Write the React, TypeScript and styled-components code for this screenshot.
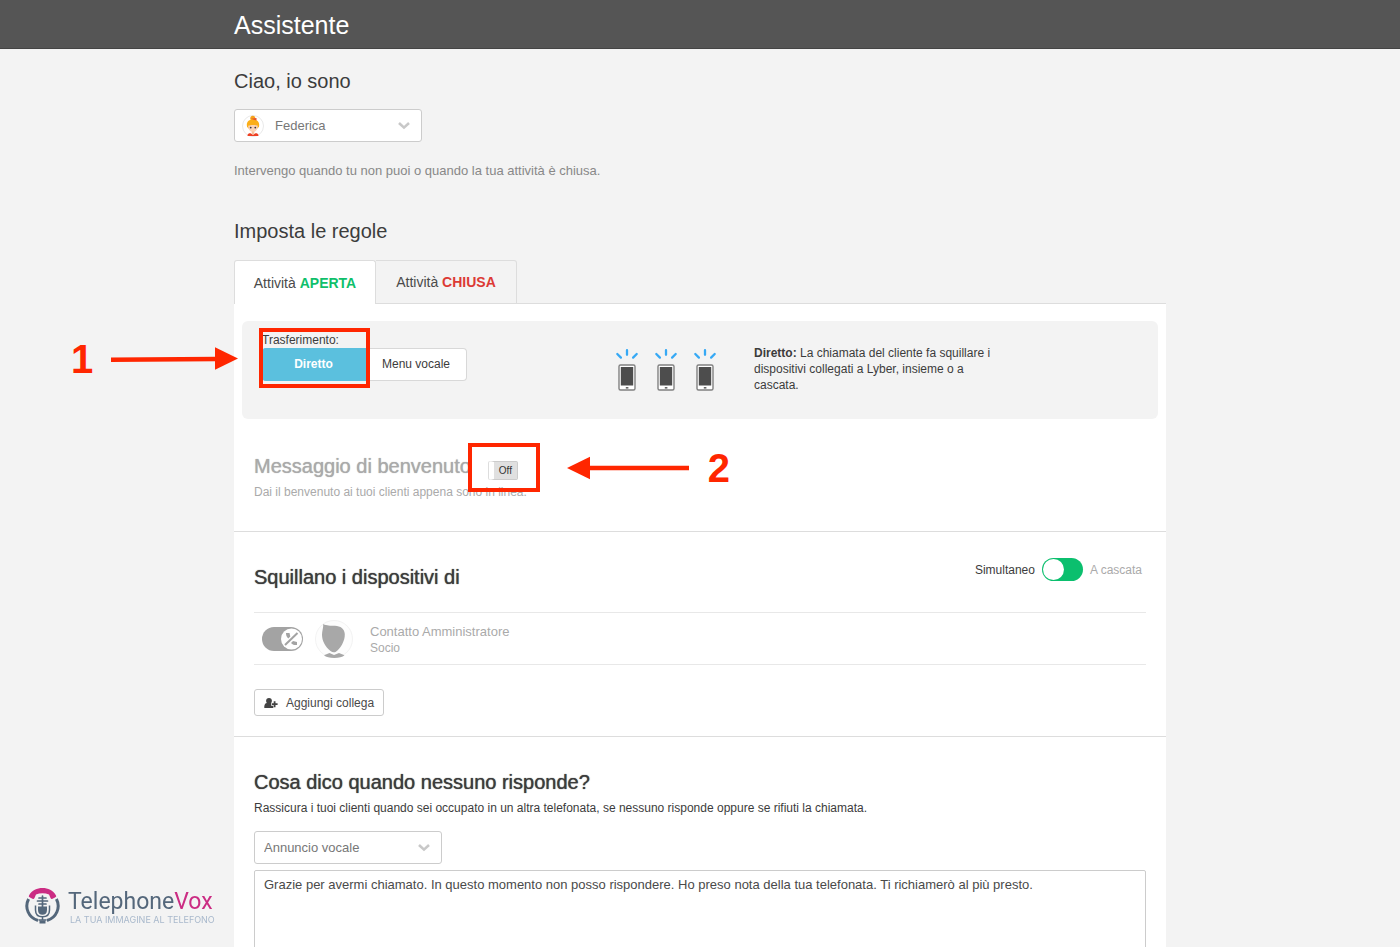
import React, { useState } from "react";
import styled, { createGlobalStyle, css } from "styled-components";

const GlobalStyle = createGlobalStyle`
  *, *::before, *::after { box-sizing: border-box; }
  body {
    margin: 0;
    background: #f3f3f3;
    color: #3c3c3c;
    font-family: "Helvetica Neue", "Liberation Sans", Arial, sans-serif;
    font-size: 12px;
    line-height: 16px;
  }
  button, select, textarea, input { font: inherit; color: inherit; margin: 0; }
  h1, h2, h3, p, ul { margin: 0; padding: 0; font-weight: 400; }
`;

const Page = styled.div`
  height: 100vh;
  overflow-y: auto;
  scrollbar-width: none;
`;

const TopBar = styled.header`
  background: #555;
  border-bottom: 1px solid #444;
  padding: 0 20px;
`;

const Column = styled.div`
  max-width: 932px;
  margin: 0 auto;
`;

const PageTitle = styled.h1`
  color: #fff;
  font-size: 25px;
  line-height: 48px;
  padding-top: 1px;
  margin-bottom: -1px;
`;

const Main = styled.main`
  padding: 20px 20px 24px;
`;

const BlockTitle = styled.h2`
  font-size: 20px;
  line-height: 24px;
`;

const Intro = styled.section`
  display: flex;
  flex-direction: column;
  align-items: flex-start;
  gap: 16px;
  margin-bottom: 40px;
`;

const Hint = styled.p`
  color: #888;
  font-size: 13px;
  margin-top: 5px;
`;

const SelectBox = styled.div`
  position: relative;
  width: 188px;
`;

const Select = styled.select<{ $withPicture?: boolean }>`
  appearance: none;
  display: block;
  width: 100%;
  height: 33px;
  padding: 0 30px 0 ${(p) => (p.$withPicture ? 40 : 9)}px;
  background: #fff;
  border: 1px solid #ccc;
  border-radius: 3px;
  color: #777;
  font-size: 13px;
`;

const Chevron = styled.svg`
  position: absolute;
  right: 12px;
  top: 12px;
  pointer-events: none;
`;

const Picture = styled.svg`
  position: absolute;
  left: 8px;
  top: 6px;
  pointer-events: none;
`;

const Tabs = styled.div`
  display: flex;
  margin-top: 17px;
`;

const Tab = styled.button<{ $active: boolean }>`
  width: 141px;
  height: 44px;
  padding: 0;
  background: #f3f3f3;
  border: solid #ddd;
  border-width: 1px 1px 1px 0;
  border-radius: 0 3px 0 0;
  color: #4a4a4a;
  font-size: 14px;
  ${(p) =>
    p.$active &&
    css`
      width: 142px;
      background: #fff;
      border-width: 1px 1px 0 1px;
      border-radius: 3px 3px 0 0;
    `}
`;

const TabsRest = styled.div`
  flex: 1;
  border-bottom: 1px solid #ddd;
`;

const State = styled.strong<{ $open?: boolean }>`
  color: ${(p) => (p.$open ? "#0fbf6b" : "#dc3a35")};
`;

const Panel = styled.div`
  background: #fff;
`;

const TransferBand = styled.div`
  padding: 17px 8px 0;
`;

const Transfer = styled.div`
  display: grid;
  grid-template-columns: 353px 139px 240px;
  align-items: start;
  min-height: 98px;
  padding: 12px 20px;
  background: #f3f3f3;
  border-radius: 6px;
`;

const TransferChoice = styled.div`
  position: relative;
  width: 205px;
  line-height: 15px;
`;

const ButtonGroup = styled.div`
  display: flex;
`;

const Choice = styled.button<{ $active: boolean }>`
  flex: none;
  width: 101px;
  height: 33px;
  padding: 0;
  background: #fff;
  border: 1px solid #d8d8d8;
  border-left: 0;
  border-radius: 0 4px 4px 0;
  ${(p) =>
    p.$active &&
    css`
      width: 104px;
      background: #5bc0de;
      border-color: #5bc0de;
      border-radius: 4px 0 0 4px;
      color: #fff;
      font-weight: 700;
    `}
`;

const Phones = styled.svg`
  margin-top: 16px;
`;

const TransferText = styled.p`
  margin-top: 12px;
`;

const Section = styled.section`
  padding: 33px 20px 20px;
  border-bottom: 1px solid #ddd;
  &:last-child { border-bottom: 0; }
`;

const Welcome = styled(Section)`
  padding: 35px 20px 31px;
  color: #aaa;
`;

const SectionTitle = styled.h3`
  font-size: 20px;
  line-height: 24px;
  text-shadow: 0 0 1px currentColor;
`;

const TitleLine = styled.div`
  display: flex;
  align-items: flex-end;
  gap: 18px;
`;

const SplitLine = styled.div`
  display: flex;
  align-items: center;
  justify-content: space-between;
  padding-right: 4px;
`;

const Note = styled.p`
  margin-top: 6px;
`;

const OffSwitch = styled.button`
  position: relative;
  width: 29px;
  height: 19px;
  margin-bottom: -2px;
  padding: 0;
  background: #e0e0e0;
  border: 1px solid #ccc;
  border-left: 5px solid #fff;
  border-radius: 2px;
  box-shadow: -1px 0 0 #ddd;
  color: #333;
  font-size: 10px;
  line-height: 16px;
`;

const Order = styled.div`
  display: flex;
  align-items: center;
  gap: 7px;
  margin-top: -15px;
`;

const OrderLabel = styled.label<{ $muted?: boolean }>`
  color: ${(p) => (p.$muted ? "#aaa" : "inherit")};
`;

const Switch = styled.input`
  appearance: none;
  width: 41px;
  height: 23px;
  border-radius: 12px;
  background: #0bbf6e;
  &::before {
    content: "";
    display: block;
    width: 21px;
    height: 21px;
    margin: 1px;
    border-radius: 50%;
    background: #fff;
  }
  &:checked::before { margin-left: 19px; }
`;

const People = styled.ul`
  list-style: none;
  margin: 23px 0 24px;
  border-top: 1px solid #e8e8e8;
`;

const Person = styled.li`
  display: flex;
  align-items: center;
  height: 52px;
  padding: 0 8px;
  gap: 12px;
  border-bottom: 1px solid #e8e8e8;
  color: #aaa;
`;

const RingSwitch = styled.button`
  display: flex;
  padding: 0;
  border: 0;
  background: none;
`;

const PersonText = styled.div`
  margin-left: 4px;
  padding-top: 2px;
`;

const PersonName = styled.p`
  font-size: 13px;
`;

const AddButton = styled.button`
  display: flex;
  align-items: center;
  gap: 8px;
  height: 27px;
  padding: 0 9px;
  background: #fff;
  border: 1px solid #ccc;
  border-radius: 3px;
  color: #4a4a4a;
`;

const Answer = styled.div`
  display: flex;
  flex-direction: column;
  gap: 6px;
  margin-top: 15px;
`;

const Message = styled.textarea`
  display: block;
  width: 100%;
  height: 120px;
  padding: 6px 9px;
  border: 1px solid #ccc;
  border-radius: 2px;
  color: #4a4a4a;
  font-size: 13px;
  resize: none;
`;

const Frame = styled.span<{ $w: number; $h: number; $x: number; $y: number }>`
  position: absolute;
  left: ${(p) => p.$x}px;
  top: ${(p) => p.$y}px;
  width: ${(p) => p.$w}px;
  height: ${(p) => p.$h}px;
  border: 4px solid #ff2600;
  pointer-events: none;
`;

const Callout = styled.div<{ $x: number; $y: number }>`
  position: absolute;
  left: ${(p) => p.$x}px;
  top: ${(p) => p.$y}px;
  display: flex;
  align-items: center;
  gap: 18px;
  color: #ff2600;
  font-size: 40px;
  font-weight: 700;
  line-height: 44px;
  pointer-events: none;
`;

const Brand = styled.a`
  position: fixed;
  left: 25px;
  bottom: 23px;
  display: flex;
  align-items: center;
  gap: 8px;
  color: #54677b;
  text-decoration: none;
`;

const BrandName = styled.div`
  font-family: Roboto, sans-serif;
  font-size: 23px;
  line-height: 28px;
`;

const BrandAccent = styled.span`
  color: #cb2c83;
`;

const BrandLine = styled.div`
  padding-left: 2px;
  color: #a9b9cc;
  font-family: Inter, sans-serif;
  font-size: 9px;
  line-height: 8px;
`;

const DownChevron = () => (
  <Chevron width="12" height="9" viewBox="0 0 12 9" aria-hidden="true">
    <path d="M1 2 L6 6.6 L11 2" fill="none" stroke="#c8c8c8" strokeWidth="2.6" />
  </Chevron>
);

const PhoneShape = ({ x }: { x: number }) => (
  <g transform={`translate(${x} 0)`}>
    <path d="M12 1.2v4.600M2.300 5l3.600 3.600M21.700 5l-3.600 3.600" stroke="#36a9f5" strokeWidth="2.300" strokeLinecap="round" fill="none" />
    <rect x="4" y="16" width="16" height="25" rx="1.500" fill="#fff" stroke="#808080" strokeWidth="1.400" />
    <rect x="5.800" y="18" width="12.400" height="18.500" fill="#4d4d4d" />
    <rect x="10.800" y="38" width="2.600" height="1.600" fill="#666" />
  </g>
);

export default function App() {
  const [open, setOpen] = useState(true);
  const [direct, setDirect] = useState(true);

  return (
    <Page>
      <GlobalStyle />
      <TopBar>
        <Column>
          <PageTitle>Assistente</PageTitle>
        </Column>
      </TopBar>
      <Main>
        <Column>
          <Intro>
            <BlockTitle>Ciao, io sono</BlockTitle>
            <SelectBox>
              <Select $withPicture aria-label="Assistente" defaultValue="Federica">
                <option>Federica</option>
              </Select>
              <Picture width="22" height="22" viewBox="0 0 22 22" aria-hidden="true">
                <circle cx="11" cy="11" r="10.5" fill="#fff" stroke="#e9e9e9" />
                <circle cx="10.800" cy="3.200" r="2.500" fill="#f5a21b" />
                <path d="M5 11.500C4 6.800 7 4.500 11 4.500S18 7 17 11.500C16 14 14 14 11 14S6 14 5 11.500Z" fill="#fbae17" />
                <path d="M9 3.800L14.500 3L14.500 5.600Z" fill="#e8512a" />
                <path d="M6.200 10.800C8.500 9.800 13.500 9.800 15.800 10.800C15.800 15 13.300 17 11 17S6.100 15 6.200 10.800Z" fill="#fbd3b4" />
                <circle cx="8.700" cy="12.600" r=".9" fill="#334" />
                <circle cx="13.300" cy="12.600" r=".9" fill="#334" />
                <path d="M9.700 16.500h2.600v3h-2.600z" fill="#f6c19d" />
                <path d="M5.500 21C5.500 18.600 7.500 18.200 9 18.400L11 20L13 18.400C14.500 18.200 16.500 18.600 16.500 21Z" fill="#ee4023" />
              </Picture>
              <DownChevron />
            </SelectBox>
            <Hint>Intervengo quando tu non puoi o quando la tua attività è chiusa.</Hint>
          </Intro>

          <BlockTitle>Imposta le regole</BlockTitle>
          <Tabs role="tablist">
            <Tab role="tab" aria-selected={open} $active={open} onClick={() => setOpen(true)}>
              Attività <State $open>APERTA</State>
            </Tab>
            <Tab role="tab" aria-selected={!open} $active={!open} onClick={() => setOpen(false)}>
              Attività <State>CHIUSA</State>
            </Tab>
            <TabsRest />
          </Tabs>

          <Panel role="tabpanel">
            <TransferBand>
              <Transfer>
                <TransferChoice>
                  <span id="transfer">Trasferimento:</span>
                  <ButtonGroup role="group" aria-labelledby="transfer">
                    <Choice $active={direct} onClick={() => setDirect(true)}>Diretto</Choice>
                    <Choice $active={!direct} onClick={() => setDirect(false)}>Menu vocale</Choice>
                  </ButtonGroup>
                  <Frame $x={-3} $y={-5} $w={111} $h={60} />
                  <Callout $x={-191} $y={4}>
                    1
                    <svg width="128" height="24" viewBox="0 0 128 24" aria-hidden="true">
                      <path d="M-1 12.800L106 12" stroke="#ff2600" strokeWidth="4.500" />
                      <path d="M104 .3L127 11.500L104 22.700Z" fill="#ff2600" />
                    </svg>
                  </Callout>
                </TransferChoice>
                <Phones width="104" height="42" viewBox="0 0 104 42" aria-hidden="true">
                  <PhoneShape x={0} />
                  <PhoneShape x={39} />
                  <PhoneShape x={78} />
                </Phones>
                <TransferText>
                  <strong>Diretto:</strong> La chiamata del cliente fa squillare i dispositivi collegati a Lyber, insieme o a cascata.
                </TransferText>
              </Transfer>
            </TransferBand>

            <Welcome>
              <TitleLine>
                <SectionTitle>Messaggio di benvenuto</SectionTitle>
                <OffSwitch role="switch" aria-checked="false" aria-label="Messaggio di benvenuto">
                  Off
                  <Frame $x={-26} $y={-19} $w={72} $h={49} />
                  <Callout $x={73} $y={-16}>
                    <svg width="123" height="24" viewBox="0 0 123 24" aria-hidden="true">
                      <path d="M20 12H122" stroke="#ff2600" strokeWidth="4.500" />
                      <path d="M23 .8L0 12L23 23.200Z" fill="#ff2600" />
                    </svg>
                    2
                  </Callout>
                </OffSwitch>
              </TitleLine>
              <Note>Dai il benvenuto ai tuoi clienti appena sono in linea.</Note>
            </Welcome>

            <Section>
              <SplitLine>
                <SectionTitle>Squillano i dispositivi di</SectionTitle>
                <Order>
                  <OrderLabel htmlFor="order">Simultaneo</OrderLabel>
                  <Switch id="order" type="checkbox" role="switch" />
                  <OrderLabel htmlFor="order" $muted>A cascata</OrderLabel>
                </Order>
              </SplitLine>
              <People>
                <Person>
                  <RingSwitch role="switch" aria-checked="false" aria-label="Contatto Amministratore">
                    <svg width="41" height="24" viewBox="0 0 41 24" aria-hidden="true">
                      <rect width="41" height="24" rx="12" fill="#a3a3a3" />
                      <circle cx="29.500" cy="12" r="10.500" fill="#fff" />
                      <path d="M23 18L35.500 6" stroke="#a3a3a3" strokeWidth="2" />
                      <path d="M24 6L27.500 6L28.300 9.500L26.300 11.500C24.500 10 24 8 24 6Z" fill="#a3a3a3" />
                      <path d="M29 16L31 14L35 15V18C33 18.300 31 18 29 16Z" fill="#a3a3a3" />
                    </svg>
                  </RingSwitch>
                  <svg width="39" height="44" viewBox="0 0 39 44" aria-hidden="true">
                    <circle cx="19" cy="22" r="18.500" fill="#fdfdfd" stroke="#f3f3f3" />
                    <path d="M8.200 7C12 9 15 8.500 20 8.800C25.500 9 29.500 12 29.800 17C30.200 24 25 32.500 20.500 35C19 35.600 17 35.300 15.500 34C10 29.500 7.200 24 7 18C6.900 14 8.500 11 8.200 7Z" fill="#a8a8a8" />
                    <path d="M9 38.300L14.500 36L19 38L24 36L29.500 38.300C26 42 12.500 42 9 38.300Z" fill="#a8a8a8" />
                  </svg>
                  <PersonText>
                    <PersonName>Contatto Amministratore</PersonName>
                    <p>Socio</p>
                  </PersonText>
                </Person>
              </People>
              <AddButton>
                <svg width="14" height="12" viewBox="0 0 14 12" aria-hidden="true">
                  <circle cx="5" cy="3.800" r="2.900" fill="#444" />
                  <path d="M.3 11C0 8 1 6 3 6H7.200V8.800H9.300V11Z" fill="#444" />
                  <path d="M10.600 4.200V10.200M7.900 7.200H13.600" stroke="#444" strokeWidth="1.800" />
                </svg>
                Aggiungi collega
              </AddButton>
            </Section>

            <Section>
              <SectionTitle>Cosa dico quando nessuno risponde?</SectionTitle>
              <Note>Rassicura i tuoi clienti quando sei occupato in un altra telefonata, se nessuno risponde oppure se rifiuti la chiamata.</Note>
              <Answer>
                <SelectBox>
                  <Select aria-label="Tipo di risposta" defaultValue="Annuncio vocale">
                    <option>Annuncio vocale</option>
                  </Select>
                  <DownChevron />
                </SelectBox>
                <Message
                  aria-label="Testo dell'annuncio"
                  defaultValue="Grazie per avermi chiamato. In questo momento non posso rispondere. Ho preso nota della tua telefonata. Ti richiamerò al più presto."
                />
              </Answer>
            </Section>
          </Panel>
        </Column>
      </Main>

      <Brand href="#">
        <svg width="35" height="37" viewBox="0 0 35 37" aria-hidden="true">
          <path d="M3.600 12A15 15 0 0 0 13 33.500M31.400 12A15 15 0 0 1 22 33.500M14.500 35H20.500" fill="none" stroke="#54677b" strokeWidth="3" />
          <path d="M4 8.500C7 3 12 1 17.500 1S28 3 31 8.500C31.500 9.500 31 10 30 10.500L27.500 11.800C26.500 12.200 26 12 25.500 11L24 7.600C20 5.800 15 5.800 11 7.600L9.500 11C9 12 8.500 12.200 7.500 11.800L5 10.500C4 10 3.500 9.500 4 8.500Z" fill="#cb2c83" />
          <path d="M14 11H21M12.500 14H22.500M14 17H21M17.500 9V20" stroke="#54677b" strokeWidth="1.700" strokeLinecap="round" />
          <path d="M13 19.500H22V23C22 26.300 20 27.800 17.500 27.800S13 26.300 13 23Z" fill="#54677b" />
          <path d="M10.500 18.500V23C10.500 27.800 13.500 29.800 17.500 29.800S24.500 27.800 24.500 23V18.500M17.500 29.500V33M13.500 33H21.500" fill="none" stroke="#54677b" strokeWidth="1.500" />
        </svg>
        <div>
          <BrandName>Telephone<BrandAccent>Vox</BrandAccent></BrandName>
          <BrandLine>LA TUA IMMAGINE AL TELEFONO</BrandLine>
        </div>
      </Brand>
    </Page>
  );
}
